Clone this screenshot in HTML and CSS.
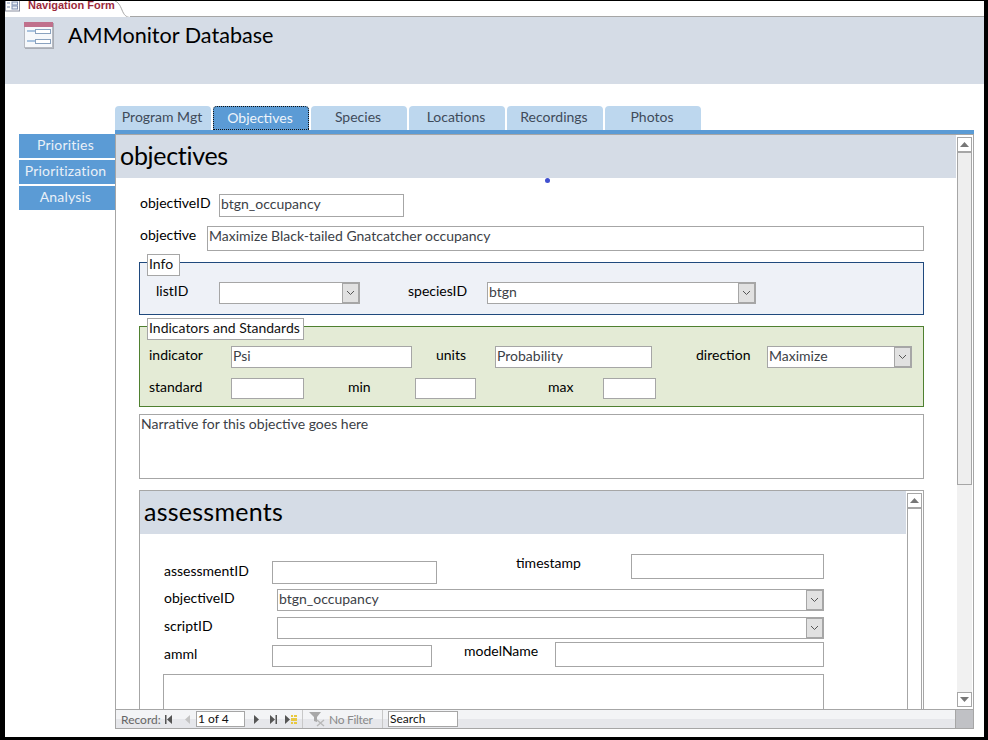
FILE: index.html
```html
<!DOCTYPE html>
<html lang="en">
<head>
    <meta charset="UTF-8">
    <meta name="viewport" content="width=device-width, initial-scale=1.0">
    <title>Navigation Form</title>
    <link rel="stylesheet" href="styles.css">
</head>
<body>
<div class="window">
    <div class="doc-tabs">
        <svg class="doc-icon" width="15" height="11" viewBox="0 0 15 11">
            <rect x="0.5" y="-3" width="14" height="13" fill="#fff" stroke="#8a8fa0"/>
            <path d="M2 2h3M2 6h3" stroke="#7d8db0" stroke-width="1.2"/>
            <rect x="7" y="1" width="5.5" height="3" fill="#e8edf5" stroke="#7d8db0"/>
            <rect x="7" y="5" width="5.5" height="3" fill="#e8edf5" stroke="#7d8db0"/>
        </svg>
        <div class="doc-tab">Navigation Form</div>
        <svg class="doc-slant" width="15" height="17" viewBox="0 0 15 17">
            <path d="M0 0C3 1 5 4 7 9S11 16 15 16.5" fill="none" stroke="#a6a6a6"/>
        </svg>
        <div class="doc-rest"></div>
    </div>

    <div class="form-header">
        <svg class="form-icon" width="32" height="29" viewBox="0 0 32 29">
            <rect x="1" y="2" width="29" height="26" fill="#a9adb5"/>
            <rect x="0.5" y="1.5" width="28" height="25" fill="#f6f8fb" stroke="#b6bac2"/>
            <rect x="0" y="1" width="29" height="5" fill="#c0708c"/>
            <path d="M3 10h8M3 20h8" stroke="#a9c3df" stroke-width="2"/>
            <rect x="11.5" y="8.5" width="15" height="4" fill="#fff" stroke="#8aa2bf"/>
            <rect x="11.5" y="18.5" width="15" height="4" fill="#fff" stroke="#8aa2bf"/>
        </svg>
        <h1>AMMonitor Database</h1>
    </div>

    <div class="form-body">
        <nav class="side-nav">
            <a>Priorities</a>
            <a>Prioritization</a>
            <a>Analysis</a>
        </nav>

        <div class="main">
            <div class="tabs">
                <a class="tab">Program Mgt</a>
                <a class="tab active">Objectives</a>
                <a class="tab">Species</a>
                <a class="tab">Locations</a>
                <a class="tab">Recordings</a>
                <a class="tab">Photos</a>
            </div>
            <div class="tab-rule"></div>

            <div class="frame">
                <div class="frame-top">
                    <div class="form-scroll">
                        <h2 class="band band-objectives">objectives</h2>
                        <span class="handle"></span>

                        <div class="fields">
                            <div class="row row-objid">
                                <label class="lbl w-objid">objectiveID</label>
                                <input class="box w-objid-box h-23" value="btgn_occupancy">
                            </div>
                            <div class="row row-obj">
                                <label class="lbl w-obj">objective</label>
                                <input class="box w-obj-box h-25" value="Maximize Black-tailed Gnatcatcher occupancy">
                            </div>

                            <div class="group group-info">
                                <div class="legend legend-info">Info</div>
                                <div class="row row-info">
                                    <label class="lbl w-list">listID</label>
                                    <div class="select w-list-box"><span></span><i class="drop"><svg width="9" height="6" viewBox="0 0 9 6"><path d="M1 1l3.5 3.5L8 1" fill="none" stroke="#555"/></svg></i></div>
                                    <label class="lbl w-species">speciesID</label>
                                    <div class="select w-species-box"><span>btgn</span><i class="drop"><svg width="9" height="6" viewBox="0 0 9 6"><path d="M1 1l3.5 3.5L8 1" fill="none" stroke="#555"/></svg></i></div>
                                </div>
                            </div>

                            <div class="group group-ind">
                                <div class="legend legend-ind">Indicators and Standards</div>
                                <div class="row row-ind">
                                    <label class="lbl w-ind">indicator</label>
                                    <input class="box w-ind-box h-22" value="Psi">
                                    <label class="lbl w-units">units</label>
                                    <input class="box w-units-box h-22" value="Probability">
                                    <label class="lbl w-dir">direction</label>
                                    <div class="select w-dir-box"><span>Maximize</span><i class="drop"><svg width="9" height="6" viewBox="0 0 9 6"><path d="M1 1l3.5 3.5L8 1" fill="none" stroke="#555"/></svg></i></div>
                                </div>
                                <div class="row row-std">
                                    <label class="lbl w-ind">standard</label>
                                    <input class="box w-std-box h-21">
                                    <label class="lbl w-min">min</label>
                                    <input class="box w-min-box h-21">
                                    <label class="lbl w-max">max</label>
                                    <input class="box w-max-box h-21">
                                </div>
                            </div>

                            <textarea class="narrative">Narrative for this objective goes here</textarea>

                            <div class="subform">
                                <div class="sub-content">
                                    <h2 class="band band-assess">assessments</h2>
                                    <div class="sub-fields">
                                        <div class="row row-a1">
                                            <label class="lbl w-aid mt-8">assessmentID</label>
                                            <input class="box w-aid-box h-23 mt-7">
                                            <label class="lbl w-stamp">timestamp</label>
                                            <input class="box w-stamp-box h-25">
                                        </div>
                                        <div class="row row-a2">
                                            <label class="lbl w-sub">objectiveID</label>
                                            <div class="select w-sub-box"><span>btgn_occupancy</span><i class="drop"><svg width="9" height="6" viewBox="0 0 9 6"><path d="M1 1l3.5 3.5L8 1" fill="none" stroke="#555"/></svg></i></div>
                                        </div>
                                        <div class="row row-a3">
                                            <label class="lbl w-sub">scriptID</label>
                                            <div class="select w-sub-box"><span></span><i class="drop"><svg width="9" height="6" viewBox="0 0 9 6"><path d="M1 1l3.5 3.5L8 1" fill="none" stroke="#555"/></svg></i></div>
                                        </div>
                                        <div class="row row-a4">
                                            <label class="lbl w-aid mt-3">amml</label>
                                            <input class="box w-amml-box h-22 mt-3">
                                            <label class="lbl w-model">modelName</label>
                                            <input class="box w-model-box h-25">
                                        </div>
                                        <textarea class="memo"></textarea>
                                    </div>
                                </div>
                                <div class="sub-bar">
                                    <div class="sub-btn"><svg width="9" height="5" viewBox="0 0 9 5"><path d="M4.5 0L9 5H0z" fill="#777"/></svg></div>
                                    <div class="sub-track"></div>
                                </div>
                            </div>
                        </div>
                    </div>

                    <div class="vbar">
                        <div class="vbtn"><svg width="9" height="5" viewBox="0 0 9 5"><path d="M4.5 0L9 5H0z" fill="#777"/></svg></div>
                        <div class="vthumb"></div>
                        <div class="vtrack"></div>
                        <div class="vbtn"><svg width="9" height="5" viewBox="0 0 9 5"><path d="M0 0h9L4.5 5z" fill="#777"/></svg></div>
                    </div>
                </div>

                <div class="record-bar">
                    <div class="records">
                        <span class="rec-label">Record:</span>
                        <svg class="rec-first" width="7" height="9" viewBox="0 0 7 9"><path d="M0 0h1.5v9H0zM7 0v9L2 4.5z" fill="#555"/></svg>
                        <svg class="rec-prev" width="5" height="9" viewBox="0 0 5 9"><path d="M5 0v9L0 4.5z" fill="#c4c4c4"/></svg>
                        <input class="rec-input rec-pos" value="1 of 4">
                        <svg class="rec-next" width="5" height="9" viewBox="0 0 5 9"><path d="M0 0v9l5-4.5z" fill="#555"/></svg>
                        <svg class="rec-last" width="7" height="9" viewBox="0 0 7 9"><path d="M0 0v9l5-4.5zM5.5 0H7v9H5.5z" fill="#555"/></svg>
                        <svg class="rec-new" width="12" height="9" viewBox="0 0 12 9"><path d="M0 0v9l5-4.5z" fill="#555"/><path d="M6 0h2v2H6zM9 0h3v2H9zM6 3h6v3H6zM6 7h2v2H6zM9 7h3v2H9z" fill="#e8c840"/></svg>
                        <span class="rec-sep rec-sep-a"></span>
                        <svg class="rec-filter" width="17" height="15" viewBox="0 0 17 15"><path d="M0 0h12L8 5v5L5 9V5z" fill="#a8a8a8"/><path d="M8 8l7 6M15 8l-7 6" stroke="#b8b8b8" stroke-width="1.4"/></svg>
                        <span class="rec-nofilter">No Filter</span>
                        <span class="rec-sep rec-sep-b"></span>
                        <input class="rec-input rec-search" value="Search">
                    </div>
                    <div class="corner"></div>
                </div>
            </div>
        </div>
    </div>
</div>
</body>
</html>
```
FILE: styles.css
```css
* {
    box-sizing: border-box;
}
body {
    margin: 0;
    font-family: "Lato", "Open Sans", sans-serif;
    font-size: 14px;
    color: #000;
}
.window {
    width: 988px;
    height: 740px;
    padding: 1px 4px 3px 5px;
    background: #000;
    overflow: hidden;
}

/* document tab strip */
.doc-tabs {
    display: flex;
    height: 16px;
    background: #fff;
    overflow: hidden;
}
.doc-icon {
    flex: none;
}
.doc-tab {
    width: 95px;
    padding-left: 8px;
    margin-top: -2px;
    font-family: "Liberation Sans", sans-serif;
    font-size: 11px;
    font-weight: bold;
    line-height: 13px;
    color: #9c2a3c;
    white-space: nowrap;
}
.doc-slant {
    flex: none;
}
.doc-rest {
    flex: 1;
    border-bottom: 1px solid #a6a6a6;
}

.form-header {
    display: flex;
    height: 67px;
    padding: 4px 0 0 19px;
    background: #d5dce6;
}
.form-icon {
    flex: none;
}
.form-header h1 {
    margin: 0 0 0 12px;
    font-size: 21.6px;
    font-weight: normal;
    line-height: 28px;
    color: #000;
}

.form-body {
    display: flex;
    height: 653px;
    padding-top: 22px;
    background: #fff;
}

/* left buttons */
.side-nav {
    display: flex;
    flex-direction: column;
    gap: 2px;
    width: 96px;
    margin: 28px 0 0 14px;
}
.side-nav a {
    height: 24px;
    padding-right: 3px;
    line-height: 22px;
    letter-spacing: 0.2px;
    text-align: center;
    background: #5b9bd5;
    color: #e9f0f8;
}

.main {
    width: 859px;
}
.tabs {
    display: flex;
    gap: 2px;
    height: 24px;
}
.tab {
    width: 96px;
    padding-right: 2px;
    line-height: 22px;
    text-align: center;
    background: #bdd7ee;
    border-radius: 4px 4px 0 0;
    color: #3f4b5a;
}
.tab.active {
    background: #5b9bd5;
    color: #eef4fa;
    border: 1px dotted #111;
    line-height: 21px;
}
.tab-rule {
    height: 4px;
    background: #5b9bd5;
}

.frame {
    height: 595px;
    border: 1px solid #a6a6a6;
}
.frame-top {
    display: flex;
    height: 574px;
}
.form-scroll {
    position: relative;
    width: 841px;
    overflow: hidden;
}
.band {
    margin: 0;
    height: 43px;
    padding-left: 4px;
    background: #d5dce6;
    font-size: 25px;
    font-weight: normal;
    line-height: 40px;
    color: #000;
}
.band-objectives {
    width: 840px;
    letter-spacing: -0.3px;
}
.band-assess {
    letter-spacing: 0.25px;
}
.handle {
    position: absolute;
    left: 429px;
    top: 43px;
    width: 5px;
    height: 5px;
    border-radius: 50%;
    background: #4050d0;
}
.fields {
    padding: 16px 0 0 23px;
}

.row {
    display: flex;
    align-items: flex-start;
}
.lbl {
    flex: none;
    line-height: 18px;
    color: #000;
}
.box, .select, .narrative, .memo {
    border: 1px solid #a6a6a6;
    background: #fff;
    font-family: inherit;
    font-size: 14px;
    color: #3c3f47;
}
.box {
    flex: none;
    padding: 0 1px 4px;
    border-radius: 0;
    outline: none;
}
.select {
    flex: none;
    display: flex;
    justify-content: space-between;
    height: 22px;
    padding-left: 1px;
    line-height: 17px;
}
.drop {
    display: flex;
    align-items: center;
    justify-content: center;
    width: 18px;
    margin: -1px -1px -1px 0;
    border: 2px solid #a6a6a6;
    border-left-width: 1px;
    background: #e1e1e1;
}

.h-21 { height: 21px; }
.h-22 { height: 22px; }
.h-23 { height: 23px; }
.h-25 { height: 25px; padding-bottom: 6px; }
.mt-3 { margin-top: 3px; }
.mt-7 { margin-top: 7px; }
.mt-8 { margin-top: 8px; }

/* objective rows */
.row-objid { padding-left: 1px; }
.w-objid { width: 79px; }
.w-objid-box { width: 185px; }
.row-obj { margin-top: 9px; padding-left: 1px; }
.w-obj { width: 67px; }
.w-obj-box { width: 717px; }

.group {
    width: 785px;
    margin-top: 11px;
    border: 1px solid;
}
.legend {
    height: 22px;
    margin: -9px 0 0 7px;
    padding-left: 1px;
    border: 1px solid #a6a6a6;
    background: #fff;
    line-height: 18px;
    color: #111;
}
.group-info {
    height: 53px;
    border-color: #1f497d;
    background: #eef1f7;
}
.legend-info { width: 33px; }
.row-info { margin-top: 6px; padding-left: 16px; }
.w-list { width: 63px; }
.w-list-box { width: 141px; }
.w-species { width: 79px; margin-left: 48px; }
.w-species-box { width: 269px; }

.group-ind {
    height: 81px;
    border-color: #4f8030;
    background: #e4ebd6;
}
.legend-ind { width: 157px; }
.row-ind { margin-top: 6px; padding-left: 9px; }
.w-ind { width: 82px; }
.w-ind-box { width: 181px; }
.w-units { width: 59px; margin-left: 24px; }
.w-units-box { width: 157px; }
.w-dir { width: 71px; margin-left: 44px; }
.w-dir-box { width: 145px; }
.row-std { margin-top: 10px; padding-left: 9px; }
.w-std-box { width: 73px; }
.w-min { width: 67px; margin-left: 44px; }
.w-min-box { width: 61px; }
.w-max { width: 55px; margin-left: 72px; }
.w-max-box { width: 53px; }

.narrative {
    display: block;
    width: 785px;
    height: 65px;
    margin-top: 7px;
    padding: 0 1px;
    resize: none;
    outline: none;
}

/* assessments subform */
.subform {
    display: flex;
    width: 785px;
    height: 260px;
    margin-top: 11px;
    border: 1px solid #a6a6a6;
}
.sub-content {
    width: 766px;
}
.sub-fields {
    padding: 20px 0 0 24px;
}
.row-a1 { height: 30px; }
.row-a2 { margin-top: 5px; }
.row-a3 { margin-top: 6px; }
.row-a4 { margin-top: 3px; }
.w-aid { width: 108px; }
.w-aid-box { width: 165px; }
.w-stamp { width: 115px; margin-left: 79px; }
.w-stamp-box { width: 193px; }
.w-sub { width: 113px; }
.w-sub-box { width: 547px; }
.w-amml-box { width: 160px; }
.w-model { width: 91px; margin-left: 32px; }
.w-model-box { width: 269px; }
.memo {
    display: block;
    width: 661px;
    height: 80px;
    margin: 7px 0 0 -1px;
    resize: none;
    outline: none;
}
.sub-bar {
    display: flex;
    flex-direction: column;
    width: 15px;
    margin: 2px 0 0 1px;
}
.sub-btn {
    display: flex;
    align-items: center;
    justify-content: center;
    height: 14px;
    border: 1px solid #a6a6a6;
    border-bottom: 0;
}
.sub-track {
    flex: 1;
    border: 1px solid #a6a6a6;
    border-top-width: 2px;
    border-bottom: 0;
}

/* main scrollbar */
.vbar {
    display: flex;
    flex-direction: column;
    width: 15px;
    margin-top: 2px;
    height: 570px;
}
.vbtn {
    flex: none;
    display: flex;
    align-items: center;
    justify-content: center;
    height: 15px;
    border: 1px solid #a6a6a6;
    background: #fff;
}
.vthumb {
    flex: none;
    height: 334px;
    margin-top: -1px;
    border: 1px solid #a6a6a6;
    border-top-width: 2px;
    background: #eee;
}
.vtrack {
    flex: 1;
    background: #f1f1f1;
}

/* record navigation */
.record-bar {
    display: flex;
    height: 19px;
    border-top: 1px solid #a6a6a6;
}
.records {
    display: flex;
    align-items: center;
    width: 839px;
    padding-left: 5px;
    font-size: 12px;
    background: linear-gradient(#f3f4f6 50%, #e6e7eb 50%);
}
.rec-label {
    width: 44px;
    color: #666;
}
.rec-prev {
    margin-left: 13px;
}
.rec-first, .rec-prev, .rec-next, .rec-last, .rec-new, .rec-filter {
    flex: none;
}
.rec-input {
    flex: none;
    height: 16px;
    padding: 0 1px 1px;
    border: 1px solid #a6a6a6;
    background: #fff;
    font-family: inherit;
    font-size: 12px;
    color: #111;
    outline: none;
}
.rec-pos {
    width: 49px;
    margin-left: 6px;
}
.rec-next { margin-left: 9px; }
.rec-last { margin-left: 11px; }
.rec-new { margin-left: 8px; }
.rec-sep {
    flex: none;
    width: 1px;
    height: 18px;
    background: #c8c8c8;
}
.rec-sep-a { margin-left: 5px; }
.rec-filter { margin-left: 6px; }
.rec-nofilter {
    width: 44px;
    margin-left: 3px;
    letter-spacing: -0.3px;
    color: #8a8a8a;
    white-space: nowrap;
}
.rec-sep-b { margin-left: 9px; }
.rec-search {
    width: 70px;
    margin-left: 5px;
}
.corner {
    flex: 1;
    border-left: 1px solid #a6a6a6;
    background: #c0c1c5;
}
```
